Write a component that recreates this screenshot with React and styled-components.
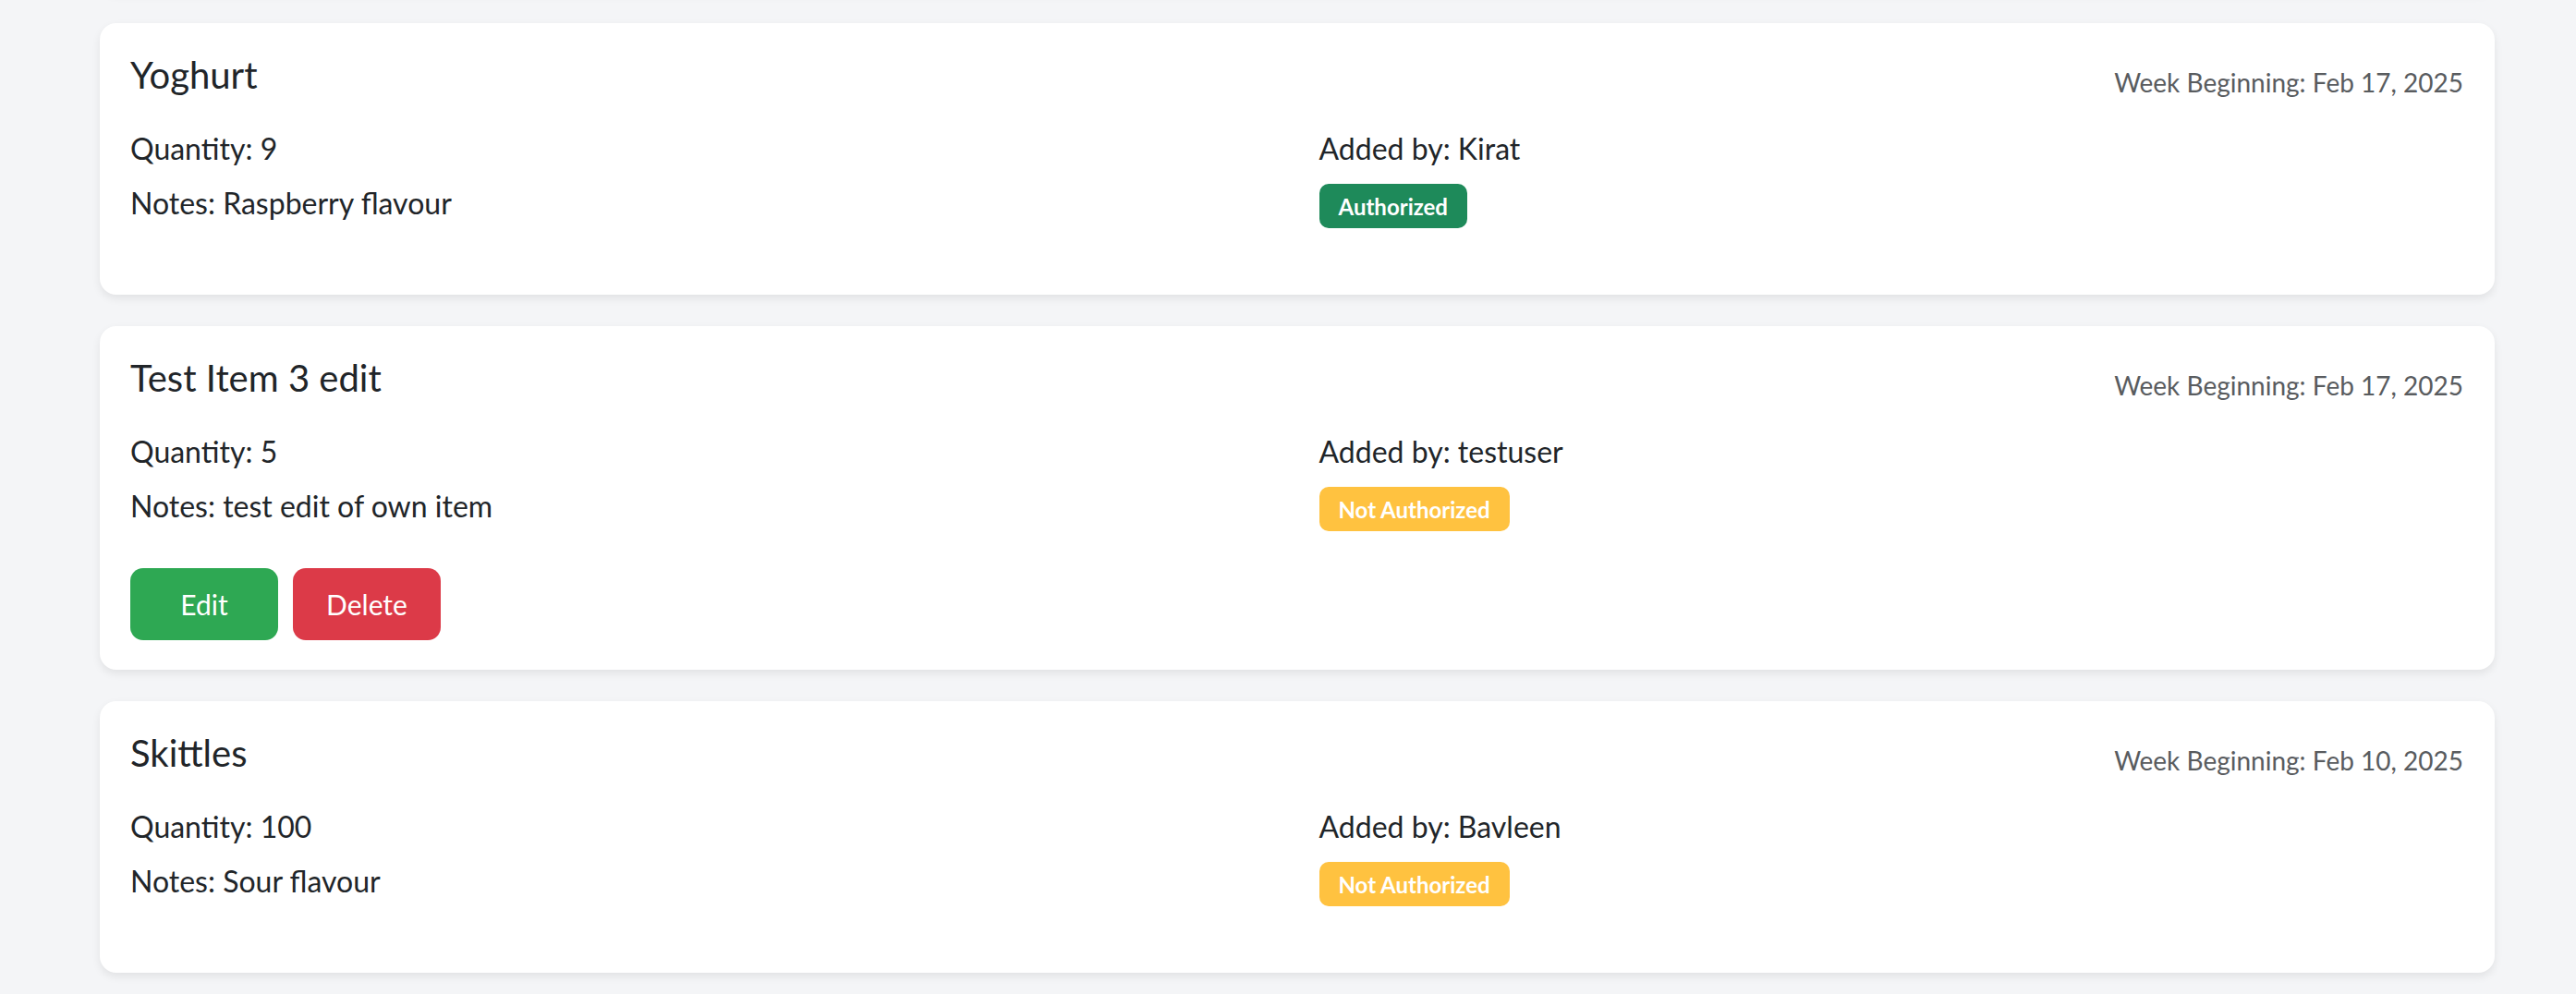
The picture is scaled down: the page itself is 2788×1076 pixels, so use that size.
import React from "react";
import styled, { createGlobalStyle } from "styled-components";

const GlobalStyle = createGlobalStyle`
  html, body {
    margin: 0;
    padding: 0;
    background: #f4f5f7;
    font-family: Lato, "Open Sans", sans-serif;
    color: #212529;
    overflow: hidden;
  }
`;

const items = [
  {
    id: 0,
    name: "Chocolate Milk",
    week: "Feb 24, 2025",
    quantity: 2,
    notes: "Low fat",
    addedBy: "Kirat",
    authorized: true,
    own: false,
  },
  {
    id: 1,
    name: "Yoghurt",
    week: "Feb 17, 2025",
    quantity: 9,
    notes: "Raspberry flavour",
    addedBy: "Kirat",
    authorized: true,
    own: false,
  },
  {
    id: 2,
    name: "Test Item 3 edit",
    week: "Feb 17, 2025",
    quantity: 5,
    notes: "test edit of own item",
    addedBy: "testuser",
    authorized: false,
    own: true,
  },
  {
    id: 3,
    name: "Skittles",
    week: "Feb 10, 2025",
    quantity: 100,
    notes: "Sour flavour",
    addedBy: "Bavleen",
    authorized: false,
    own: false,
  },
];

const ItemCard = ({ item }) => (
  <Card>
    <Header>
      <Title>{item.name}</Title>
      <Week>Week Beginning: {item.week}</Week>
    </Header>
    <Row>
      <Col>
        <Line>Quantity: {item.quantity}</Line>
        <Line>Notes: {item.notes}</Line>
      </Col>
      <Col $gap={14}>
        <Line>Added by: {item.addedBy}</Line>
        <Badge $ok={item.authorized}>
          {item.authorized ? "Authorized" : "Not Authorized"}
        </Badge>
      </Col>
    </Row>
    {item.own && (
      <Actions>
        <ActionButton $variant="edit">Edit</ActionButton>
        <ActionButton $variant="delete">Delete</ActionButton>
      </Actions>
    )}
  </Card>
);

const App = () => (
  <>
    <GlobalStyle />
    <Page>
      <List>
        {items.map((item) => (
          <ItemCard key={item.id} item={item} />
        ))}
      </List>
    </Page>
  </>
);

const Page = styled.div`
  width: 100%;
  height: 1076px;
  overflow: hidden;
  padding-left: 108px;
  box-sizing: border-box;
`;

// list is scrolled: the previous card sits just above the fold
const List = styled.div`
  width: 2592px;
  margin-top: -303px;
  display: flex;
  flex-direction: column;
  gap: 34px;
`;

const Card = styled.div`
  background: #fff;
  border-radius: 18px;
  box-shadow: 0 4px 10px rgba(0, 0, 0, 0.08);
  padding: 32px 34px 32px 33px;
  box-sizing: border-box;
`;

const Header = styled.div`
  display: flex;
  align-items: center;
  justify-content: space-between;
  margin-bottom: 16px;
`;

const Title = styled.h5`
  margin: 0 0 16px;
  font-size: 40px;
  font-weight: 400;
  line-height: 48px;
  color: #212529;
`;

const Week = styled.span`
  font-size: 28px;
  line-height: 42px;
  color: #595c5f;
`;

const Row = styled.div`
  display: grid;
  grid-template-columns: 1fr 1fr;
  padding-bottom: 40px;
  align-items: start;
`;

const Col = styled.div`
  display: flex;
  flex-direction: column;
  align-items: flex-start;
  gap: ${(p) => p.$gap ?? 11}px;
  &:last-child {
    padding-left: 24px;
  }
`;

const Line = styled.p`
  margin: 0;
  font-size: 32px;
  line-height: 48px;
  color: #212529;
`;

const Badge = styled.span`
  display: inline-flex;
  align-items: center;
  height: 48px;
  padding: 0 21px;
  border-radius: 10px;
  font-size: 24px;
  font-weight: 700;
  color: #fff;
  background: ${(p) => (p.$ok ? "#1e8a5a" : "#ffc240")};
`;

const Actions = styled.div`
  display: flex;
  gap: 16px;
`;

const ActionButton = styled.button`
  width: 160px;
  height: 78px;
  border: none;
  border-radius: 14px;
  font-family: Lato, "Open Sans", sans-serif;
  font-size: 30px;
  color: #fff;
  cursor: pointer;
  background: ${(p) => (p.$variant === "edit" ? "#2ea853" : "#dc3a48")};
`;

export default App;
